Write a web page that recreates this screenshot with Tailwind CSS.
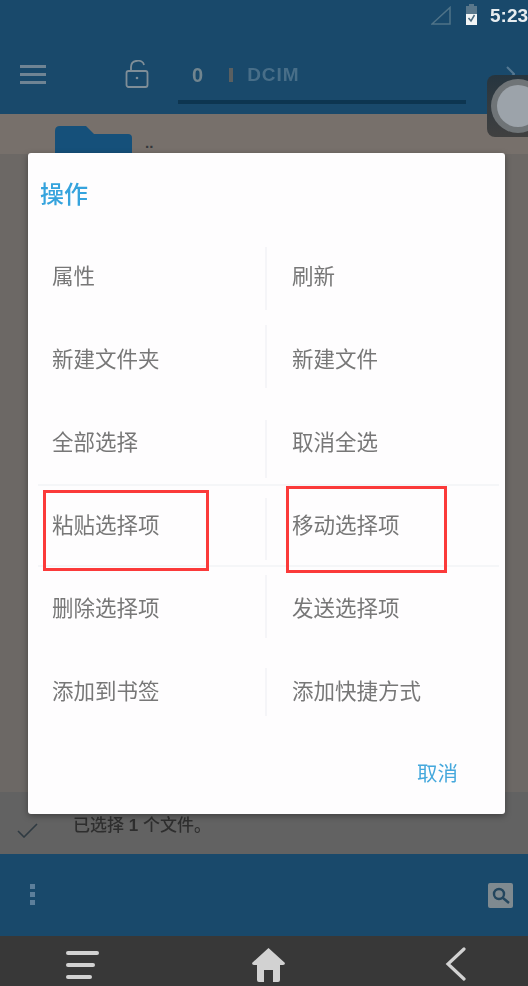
<!DOCTYPE html>
<html lang="zh-CN">
  <head>
    <meta charset="UTF-8" />
    <meta name="viewport" content="width=device-width, initial-scale=1.0" />
    <script src="https://cdn.jsdelivr.net/npm/@tailwindcss/browser@4"></script>
    <title>操作</title>
  </head>
  <body class="bg-[#383838] font-['Liberation_Sans','Noto_Sans_CJK_SC',sans-serif]">
    <div id="screen" class="relative w-[528px] h-[986px] overflow-hidden flex flex-col">
      <!-- status bar -->
      <div class="h-[50px] bg-[#19496b] flex items-start justify-end">
        <svg class="mt-[6px] w-[20px] h-[19px] mr-[14px]" viewBox="0 0 20 19" fill="none">
          <path d="M1 18 L19 1.5 V18 Z" stroke="#4f7388" stroke-width="1.5" />
        </svg>
        <svg class="mt-[4px] w-[13px] h-[21px] mr-[12px]" viewBox="0 0 13 21">
          <path d="M4 0 H9 V2 H12 V21 H1 V2 H4 Z" fill="#59778b" />
          <path d="M1 10 H12 V21 H1 Z" fill="#f2f5f6" />
          <path d="M3.5 14 L6 17 L9.5 11" stroke="#4b6a7e" stroke-width="1.5" fill="none" />
        </svg>
        <span class="mt-[6px] text-[19px] font-bold leading-[20px] text-[#e8edf0] w-[38px] whitespace-nowrap blur-[0.4px]">5:23</span>
      </div>

      <!-- toolbar -->
      <div class="relative h-[64px] bg-[#19496b] flex items-start pt-[15px]">
        <div class="ml-[20px] w-[26px] flex flex-col gap-[5px] blur-[0.5px]">
          <div class="h-[3px] bg-[#6f8494]"></div>
          <div class="h-[3px] bg-[#6f8494]"></div>
          <div class="h-[3px] bg-[#6f8494]"></div>
        </div>
        <svg class="ml-[79px] -mt-[5px] w-[24px] h-[28px] blur-[0.4px]" viewBox="0 0 24 28" fill="none">
          <path d="M6 11 V7 C6 -1 18 -1 19 5" stroke="#7f8e98" stroke-width="1.8" />
          <rect x="1.5" y="11" width="21" height="16" rx="2" stroke="#7f8e98" stroke-width="1.8" />
          <circle cx="12" cy="18" r="1.3" fill="#7f8e98" />
        </svg>
        <span class="ml-[43px] text-[20px] leading-[20px] font-bold text-[#71858f] blur-[0.5px]">0</span>
        <div class="ml-[26px] mt-[3px] w-[4px] h-[14px] bg-[#5a5f60] blur-[0.5px]"></div>
        <span class="ml-[14px] text-[19px] leading-[20px] font-bold tracking-[1px] text-[#486e88] blur-[0.6px]">DCIM</span>
        <svg class="ml-[206px] w-[9px] h-[18px]" viewBox="0 0 9 18" fill="none">
          <path d="M1 2 L8 9 L1 16" stroke="#557892" stroke-width="2" />
        </svg>
        <div class="absolute left-[178px] top-[50px] w-[288px] h-[4px] bg-[#0d3550]"></div>
      </div>

      <!-- file list under the scrim -->
      <div class="flex-1 bg-[#6c6865] flex flex-col justify-between">
        <div class="h-[40px] bg-[#77706b] flex items-start pl-[55px] pt-[12px]">
          <svg class="w-[77px] h-[30px] shrink-0" viewBox="0 0 77 30">
            <path d="M0 5 Q0 0 5 0 H31 L39 8 H73 Q77 8 77 12 V30 H0 Z" fill="#15507a" />
          </svg>
          <span class="ml-[13px] mt-[9px] text-[15px] leading-none font-bold text-[#33373a]">..</span>
        </div>
        <div class="h-[62px] bg-[#626262] flex items-start">
          <svg class="ml-[17px] mt-[31px] w-[21px] h-[15px] shrink-0" viewBox="0 0 21 15" fill="none">
            <path d="M1 8 L7 14 L20 1" stroke="#2f3a42" stroke-width="1.6" />
          </svg>
          <span class="ml-[35px] mt-[22px] text-[17px] leading-[24px] font-medium text-[#2e2e2e] blur-[0.5px]">已选择 <b>1</b> 个文件。</span>
        </div>
      </div>

      <!-- bottom bar -->
      <div class="h-[82px] bg-[#19496b] flex items-center justify-between pl-[30px] pr-[15px]">
        <div class="flex flex-col gap-[3px] -mt-[1px] blur-[0.4px]">
          <div class="w-[5px] h-[5px] bg-[#5d7f9b]"></div>
          <div class="w-[5px] h-[5px] bg-[#5d7f9b]"></div>
          <div class="w-[5px] h-[5px] bg-[#5d7f9b]"></div>
        </div>
        <div class="w-[25px] h-[25px] rounded-[2px] bg-[#7f8a90] flex items-center justify-center">
          <svg class="w-[19px] h-[19px]" viewBox="0 0 19 19" fill="none">
            <circle cx="8" cy="8" r="5" stroke="#23465e" stroke-width="2.4" />
            <path d="M12 12 L18 17" stroke="#23465e" stroke-width="2.4" />
          </svg>
        </div>
      </div>

      <!-- navigation bar -->
      <div class="h-[50px] bg-[#383838] relative flex items-start">
        <div class="ml-[66px] mt-[15px] flex flex-col gap-[8px]">
          <div class="w-[33px] h-[4px] rounded-full bg-[#d2d2d2]"></div>
          <div class="w-[29px] h-[4px] rounded-full bg-[#d2d2d2]"></div>
          <div class="w-[26px] h-[4px] rounded-full bg-[#d2d2d2]"></div>
        </div>
        <svg class="ml-[153px] mt-[12px] w-[33px] h-[34px]" viewBox="0 0 33 34">
          <path d="M16.5 0 L33 15 Q33 17 31 17 H28 V32 Q28 34 26 34 H21 V22 H12 V34 H7 Q5 34 5 32 V17 H2 Q0 17 0 15 Z" fill="#d2d2d2" />
        </svg>
        <svg class="ml-[160px] mt-[11px] w-[21px] h-[34px]" viewBox="0 0 21 34" fill="none">
          <path d="M19 2 L3 17 L19 32" stroke="#d2d2d2" stroke-width="3.2" stroke-linecap="round" />
        </svg>
      </div>

      <!-- floating assistive button -->
      <div class="absolute left-[487px] top-[75px] w-[62px] h-[62px] rounded-[8px] bg-gradient-to-b from-[#26353f] to-[#404040] flex items-center justify-center">
        <div class="w-[54px] h-[54px] rounded-full bg-[#6f7477] flex items-center justify-center">
          <div class="w-[42px] h-[42px] rounded-full bg-[#9ca3aa]"></div>
        </div>
      </div>

      <!-- dialog -->
      <div id="dialog" class="absolute left-[28px] top-[153px] w-[477px] h-[661px] bg-[#fefdfe] rounded-[3px] shadow-[0_2px_6px_rgba(0,0,0,0.35)] flex flex-col">
        <h2 class="h-[82px] pl-[12px] pt-[24px] text-[24px] leading-[36px] font-medium text-[#35a3dd] blur-[0.4px]">操作</h2>
        <div class="grid grid-cols-[239px_1fr] text-[21.5px] leading-[30px] text-[#777777]">
          <div class="h-[83px] flex items-center justify-between pl-[24px]">
            <span class="blur-[0.5px]">属性</span>
            <div class="self-start mt-[12px] w-[2px] h-[63px] bg-[#f5f5f8]"></div>
          </div>
          <div class="h-[83px] flex items-center pl-[25px]"><span class="blur-[0.5px]">刷新</span></div>
          <div class="h-[83px] flex items-center justify-between pl-[24px]">
            <span class="blur-[0.5px]">新建文件夹</span>
            <div class="self-start mt-[7px] w-[2px] h-[63px] bg-[#f5f5f8]"></div>
          </div>
          <div class="h-[83px] flex items-center pl-[25px]"><span class="blur-[0.5px]">新建文件</span></div>
          <div class="h-[83px] flex items-center justify-between pl-[24px]">
            <span class="blur-[0.5px]">全部选择</span>
            <div class="self-start mt-[19px] w-[2px] h-[58px] bg-[#f5f5f8]"></div>
          </div>
          <div class="h-[83px] flex items-center pl-[25px]"><span class="blur-[0.5px]">取消全选</span></div>
          <div class="relative h-[83px] ml-[10px] flex items-center justify-between pl-[14px] border-y-2 border-[#f5f6f8]">
            <span class="blur-[0.5px]">粘贴选择项</span>
            <div class="self-start mt-[12px] w-[2px] h-[62px] bg-[#f5f5f8]"></div>
            <div class="absolute left-[5px] top-[4px] w-[166px] h-[81px] border-[3px] border-[#fb3a3a]"></div>
          </div>
          <div class="relative h-[83px] mr-[6px] flex items-center pl-[25px] border-y-2 border-[#f5f6f8]">
            <span class="blur-[0.5px]">移动选择项</span>
            <div class="absolute left-[19px] top-0 w-[161px] h-[87px] border-[3px] border-[#fb3a3a]"></div>
          </div>
          <div class="h-[83px] flex items-center justify-between pl-[24px]">
            <span class="blur-[0.5px]">删除选择项</span>
            <div class="self-start mt-[8px] w-[2px] h-[63px] bg-[#f5f5f8]"></div>
          </div>
          <div class="h-[83px] flex items-center pl-[25px]"><span class="blur-[0.5px]">发送选择项</span></div>
          <div class="h-[83px] flex items-center justify-between pl-[24px]">
            <span class="blur-[0.5px]">添加到书签</span>
            <div class="self-start mt-[18px] w-[2px] h-[48px] bg-[#f5f5f8]"></div>
          </div>
          <div class="h-[83px] flex items-center pl-[25px]"><span class="blur-[0.5px]">添加快捷方式</span></div>
        </div>
        <div class="flex-1 flex items-start justify-end pr-[47px] pt-[26px]">
          <button class="text-[20.5px] leading-[30px] text-[#45a8dc] blur-[0.4px]">取消</button>
        </div>
      </div>
    </div>
  </body>
</html>
